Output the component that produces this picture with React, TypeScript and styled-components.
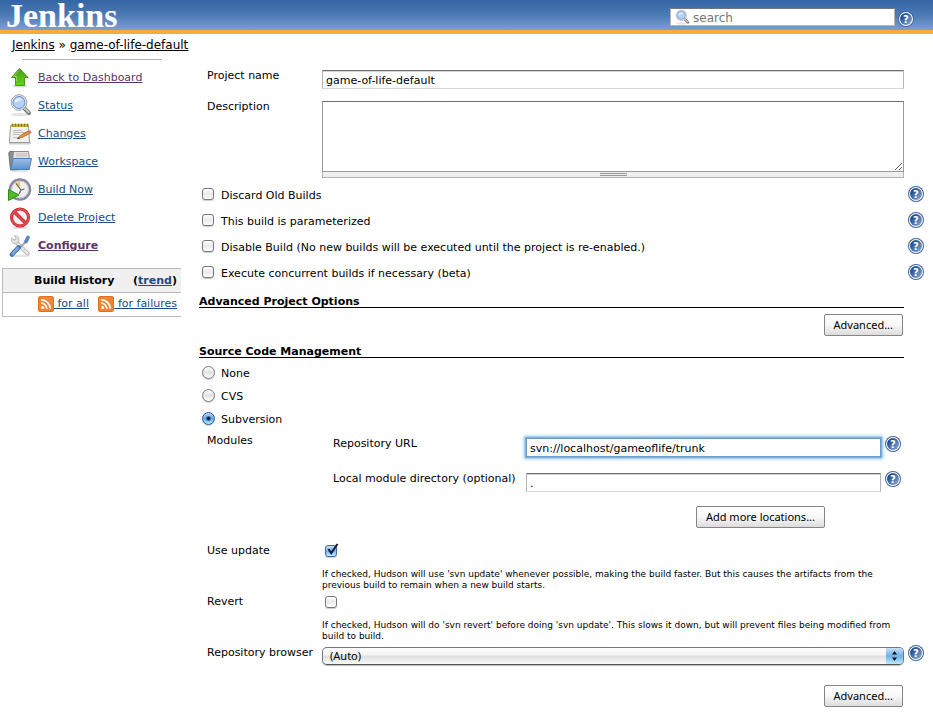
import React, { useState } from "react";
import styled, { createGlobalStyle, css } from "styled-components";

const GlobalStyle = createGlobalStyle`
  *, *::before, *::after { box-sizing: border-box; }
  body {
    margin: 0;
    background: #fff;
    color: #000;
    font: 11px/16px "DejaVu Sans", Verdana, sans-serif;
  }
  button, input, textarea, select { font: inherit; color: inherit; margin: 0; }
`;

/* ---------- header ---------- */

const Header = styled.header`
  display: flex;
  justify-content: space-between;
  height: 34px;
  padding: 0 19px 0 6px;
  border-bottom: 4px solid #fbab3c;
  background: linear-gradient(#3465a4, #4c7ab4 50%, #7d9fd3);
`;

const Logo = styled.a`
  color: #fff;
  font: bold 34px/32px "Liberation Serif", "Times New Roman", serif;
  text-decoration: none;
`;

const SearchForm = styled.form`
  display: flex;
  align-items: flex-start;
  gap: 3px;
  padding-top: 8px;
`;

const SearchBox = styled.label`
  display: flex;
  align-items: center;
  gap: 3px;
  width: 225px;
  height: 18px;
  padding-left: 3px;
  border: 1px solid #b8b4ac;
  border-top-color: #6f7787;
  background: #fff;
`;

const SearchInput = styled.input`
  flex: 1;
  min-width: 0;
  border: 0;
  padding: 1px 0 0;
  outline: 0;
  background: transparent;
  font-size: 12px;
  &::placeholder { color: #757575; opacity: 1; }
`;

/* ---------- page frame ---------- */

const Breadcrumbs = styled.nav`
  height: 24px;
  padding: 3px 12px;
  font-size: 12px;
  a { color: #000; }
`;

const Page = styled.div`
  display: grid;
  grid-template-columns: 199px minmax(0, 1fr);
`;

const Sidebar = styled.aside`
  padding-top: 1px;
`;

const Divider = styled.hr`
  width: 140px;
  height: 1px;
  margin: 0 0 3px 22px;
  border: 0;
  background: #b4b4b4;
`;

const Tasks = styled.ul`
  margin: 0;
  padding: 0 0 9px 8px;
  list-style: none;
`;

const Task = styled.li`
  display: flex;
  align-items: center;
  gap: 6px;
  height: 28px;
  svg { flex: none; }
  a { padding-top: 2px; }
`;

const Link = styled.a<{ $visited?: boolean; $strong?: boolean }>`
  color: ${(p) => (p.$visited ? "#5c3566" : "#204a87")};
  font-weight: ${(p) => (p.$strong ? "bold" : "inherit")};
`;

const History = styled.section`
  width: 179px;
  margin-left: 2px;
  border: 1px solid #bbb;
  border-right: 0;
`;

const HistoryHead = styled.h2`
  display: flex;
  justify-content: space-between;
  margin: 0;
  padding: 5px 4px 4px 31px;
  border-bottom: 1px solid #bbb;
  background: #f0f0f0;
  font-size: 11px;
  line-height: 14px;
`;

const Feeds = styled.div`
  display: flex;
  justify-content: space-between;
  height: 23px;
  padding: 3px 4px 0 35px;
  line-height: 16px;
  white-space: pre;
  svg { vertical-align: -5px; }
`;

/* ---------- form ---------- */

const Form = styled.form`
  padding-top: 10px;
`;

const Row = styled.div<{ $height: number }>`
  display: grid;
  grid-template-columns: 115px minmax(0, 1fr) 29px;
  min-height: ${(p) => p.$height}px;
  padding-left: 8px;
  white-space: nowrap;
`;

const fieldFrame = css`
  display: block;
  width: 100%;
  border: 1px solid #b5b5b5;
  border-top-color: #6e6e6e;
  border-bottom-color: #d6d6d6;
  border-radius: 0;
  background: #fff;
`;

const TextInput = styled.input`
  ${fieldFrame}
  height: 19px;
  margin-top: 2px;
  padding: 1px 3px 0;
  box-shadow: inset 0 1px #d4d4d4;
  outline: 0;
  &[data-active="true"] {
    border-color: #6a9dc8;
    box-shadow: 0 0 1px 1px #7db2dc, 0 0 3px 2px #8fc3ec;
  }
`;

const TextArea = styled.textarea`
  ${fieldFrame}
  height: 71px;
  margin-top: 2px;
  padding: 2px 3px;
  border-color: #6e6e6e #9a9a9a #9a9a9a;
  resize: vertical;
  outline: 0;
`;

const ResizeBar = styled.div`
  display: flex;
  justify-content: center;
  align-items: center;
  height: 6px;
  border: 1px solid #b5b5b5;
  border-top: 0;
  background: #eee;
  &::after {
    content: "";
    width: 27px;
    height: 3px;
    border: solid #999;
    border-width: 1px 0;
  }
`;

const HelpButton = styled.button<{ $drop?: number }>`
  display: block;
  width: 16px;
  height: 16px;
  margin: ${(p) => p.$drop ?? 0}px 0 0;
  padding: 0;
  border: 0;
  background: none;
  cursor: pointer;
  svg { display: block; }
`;

const HelpSlot = styled.div`
  padding-left: 4px;
`;

const Choices = styled.div<{ $pitch: number; $top: number; $bottom: number }>`
  display: grid;
  grid-auto-rows: ${(p) => p.$pitch}px;
  padding: ${(p) => p.$top}px 0 ${(p) => p.$bottom}px;
`;

const Choice = styled.div`
  display: flex;
  justify-content: space-between;
  align-items: center;
  padding: 0 9px 0 3px;
`;

const ChoiceLabel = styled.label`
  display: flex;
  align-items: center;
  gap: 7px;
  span { padding-top: 3px; }
`;

const Check = styled.input.attrs({ type: "checkbox" })`
  appearance: none;
  display: block;
  position: relative;
  flex: none;
  width: 12px;
  height: 12px;
  border: 1px solid #777;
  border-radius: 3px;
  background: linear-gradient(#fff, #e9e9e9 50%, #fff);
  box-shadow: 0 1px 1px #ccc;
  &:checked {
    border-color: #41689c;
    background: linear-gradient(#c6e0f8, #78b4ea 50%, #bdeaff);
  }
  &:checked::after {
    content: "";
    position: absolute;
    left: 0;
    bottom: 0;
    width: 13px;
    height: 13px;
    background: url("data:image/svg+xml,%3Csvg xmlns='http://www.w3.org/2000/svg' viewBox='0 0 13 13'%3E%3Cpath d='M2.5 6l2.7 4.2L11.5 1' fill='none' stroke='%23142136' stroke-width='2.1'/%3E%3C/svg%3E");
  }
`;

const CheckField = styled.div`
  padding: 2px 0 0 3px;
`;

const Radio = styled.input.attrs({ type: "radio" })`
  appearance: none;
  flex: none;
  width: 13px;
  height: 13px;
  margin-right: -1px;
  border: 1px solid #7b7b7b;
  border-radius: 50%;
  background: linear-gradient(#fff, #e2e2e2 50%, #fff);
  box-shadow: 0 1px 1px #ccc;
  &:checked {
    border-color: #315a95;
    background:
      radial-gradient(circle, #10213f 0 1px, transparent 3px),
      linear-gradient(#b8d8f6, #62a8e6 50%, #b4eaff);
  }
`;

const SectionTitle = styled.h3`
  margin: 0 29px 0 0;
  padding-top: 10px;
  border-bottom: 1px solid #000;
  font-size: 11px;
  line-height: 11px;
`;

const Actions = styled.div<{ $top: number; $right: number }>`
  display: flex;
  justify-content: flex-end;
  padding: ${(p) => p.$top}px ${(p) => p.$right}px 0 0;
`;

const PushButton = styled.button`
  height: 22px;
  padding: 0 9px;
  border: 1px solid #858585;
  border-radius: 2px;
  background: linear-gradient(#fff, #f8f8f8 50%, #dcdcdc);
  font: 11px/20px "Noto Sans", "Lucida Grande", sans-serif;
`;

const Module = styled.div`
  display: grid;
  grid-template-columns: 193px minmax(0, 1fr) 23px;
  height: 35px;
  padding-left: 11px;
`;

const Modules = styled.div`
  padding-top: 3px;
`;

const Hint = styled.p`
  margin: 12px 0 0;
  font-size: 9px;
  line-height: 11px;
  white-space: normal;
`;

const SelectFrame = styled.div`
  display: flex;
  height: 18px;
  margin-top: 2px;
  border: 1px solid #777;
  border-bottom-color: #555;
  border-radius: 5px;
  overflow: hidden;
  background: linear-gradient(#fff, #f3f3f3 45%, #dedede 50%, #fafafa);
  box-shadow: 0 1px 1px #bbb;
  svg { flex: none; }
`;

const Select = styled.select`
  appearance: none;
  flex: 1;
  min-width: 0;
  padding: 0 7px;
  border: 0;
  outline: 0;
  background: transparent;
  font: 11px/16px "Noto Sans", "Lucida Grande", sans-serif;
`;

/* ---------- icons ---------- */

const HelpIcon = () => (
  <svg width="16" height="16" viewBox="0 0 16 16" aria-hidden="true">
    <defs>
      <linearGradient id="help-fill" x2="1" y2="1">
        <stop offset="0.2" stopColor="#204a87" />
        <stop offset="0.9" stopColor="#85a5d2" />
      </linearGradient>
    </defs>
    <circle cx="8" cy="8" r="8" fill="#3c639e" />
    <circle cx="8" cy="8" r="7" fill="#fff" />
    <circle cx="8" cy="8" r="6" fill="url(#help-fill)" />
    <text x="8" y="12" textAnchor="middle" fontFamily="DejaVu Sans" fontWeight="bold" fontSize="10" fill="#fff">?</text>
  </svg>
);

const Help = ({ topic, drop }: { topic: string; drop?: number }) => (
  <HelpButton type="button" aria-label={`Help for ${topic}`} $drop={drop}>
    <HelpIcon />
  </HelpButton>
);

const Svg24 = ({ children }: { children: React.ReactNode }) => (
  <svg width="24" height="24" viewBox="0 0 24 24" aria-hidden="true">{children}</svg>
);

const ArrowIcon = () => (
  <Svg24>
    <defs>
      <linearGradient id="arrow-fill" x2="0" y2="1">
        <stop stopColor="#3f9d10" />
        <stop offset="0.55" stopColor="#5cb81c" />
        <stop offset="1" stopColor="#5ed80c" />
      </linearGradient>
    </defs>
    <ellipse cx="12" cy="21" rx="8" ry="1.6" fill="#ddd" />
    <path d="M11.5 3.5L20 12.5h-3.5v8h-9v-8H3.5z" fill="url(#arrow-fill)" stroke="#459a1b" strokeLinejoin="round" />
    <path d="M11.5 5L5.5 11.5h3V16" fill="none" stroke="#8ed15c" />
  </Svg24>
);

const lens = (
  <>
    <ellipse cx="12" cy="21.5" rx="9" ry="1.8" fill="#e4e4e4" />
    <path d="M16.5 15.500l4.500 4.500" stroke="#777" strokeWidth="4" strokeLinecap="round" />
    <path d="M16.500 15.300l4.200 4" stroke="#c9c9c9" strokeWidth="2" strokeLinecap="round" />
    <circle cx="11" cy="9.5" r="7.8" fill="#e9eef4" stroke="#a3a8b0" />
    <circle cx="11" cy="9.5" r="6" fill="#b5d2f5" stroke="#6c8fc0" />
    <path d="M6.500 9.500c0-5 6-5.500 8-2.500-3 0-5 2-8 2.500z" fill="#e6f1fd" />
  </>
);

const LensIcon = () => <Svg24>{lens}</Svg24>;
const SmallLensIcon = () => (
  <svg width="16" height="16" viewBox="0 0 24 24" aria-hidden="true">{lens}</svg>
);

const NotepadIcon = () => (
  <Svg24>
    <rect x="1" y="21" width="22" height="2.5" rx="1" fill="#cfcfcf" />
    <path d="M2.5 4.500h18l1 17h-20z" fill="#f2f2f0" stroke="#999" />
    <path d="M3.500 3h17v3H3.500z" fill="#c6ac3a" />
    <path d="M4.500 2.500v3M7.500 2.500v3M10.500 2.500v3M13.500 2.500v3M16.500 2.500v3M19.500 2.500v3" stroke="#8a7726" />
    <path d="M5 9.500h9M5 11.500h13M5 13.500h7M5 16.500h5" stroke="#bbb" />
    <path d="M9.500 17.500l3-3.200 8.500-4.500 1.500 2.200-8.500 4.500z" fill="#e29a39" stroke="#9a672a" strokeWidth="0.800" />
    <path d="M20 10.300l1.500 2.300 2.200-1.200-1.500-2.200z" fill="#e06a6a" />
    <path d="M9 18l1.600-1.800 1.200 1.200z" fill="#333" />
  </Svg24>
);

const FolderIcon = () => (
  <Svg24>
    <defs>
      <linearGradient id="folder-fill" x2="0" y2="1">
        <stop stopColor="#9dbfe6" />
        <stop offset="1" stopColor="#5e93cf" />
      </linearGradient>
    </defs>
    <path d="M.8 4l1-1.500h6l1 1.500v17H2.500z" fill="#8b8d8c" stroke="#707270" />
    <path d="M5.500 2.500h15l1 9-2 8H3.500z" fill="#e2e2e2" stroke="#8b8b8b" />
    <path d="M8 5h11M8 7h11" stroke="#bbb" />
    <path d="M5.200 9.500h18.300l-2.300 11H2.700z" fill="url(#folder-fill)" stroke="#4c7db8" strokeLinejoin="round" />
    <path d="M4 22h16" stroke="#ccc" />
  </Svg24>
);

const ClockIcon = () => (
  <Svg24>
    <circle cx="12" cy="12.500" r="10" fill="#efefec" stroke="#8b88a0" strokeWidth="2.400" />
    <circle cx="12" cy="12.500" r="8.300" fill="none" stroke="#d0cfda" />
    <path d="M12 12.500L7 6.500a7 7 0 0 1 5-1.800z" fill="#e8c95e" />
    <path d="M8 6.500l5 6.500-2 4M13 13l3.500-1" fill="none" stroke="#666" strokeWidth="1.200" />
    <path d="M.500 12.500l10.500 5.500L.500 23.500z" fill="#4fbd2a" stroke="#2f8d17" />
  </Svg24>
);

const ForbiddenIcon = () => (
  <Svg24>
    <ellipse cx="12" cy="22.500" rx="8" ry="1.300" fill="#ddd" />
    <circle cx="12" cy="12.500" r="8.500" fill="#f3efef" stroke="#b81f24" strokeWidth="3" />
    <path d="M6.200 6.700l11.600 11.600" stroke="#b81f24" strokeWidth="3.400" />
    <circle cx="12" cy="12.500" r="8.500" fill="none" stroke="#e5484c" strokeWidth="1.800" />
    <path d="M6.200 6.700l11.600 11.600" stroke="#e5484c" strokeWidth="2.200" />
  </Svg24>
);

const ToolsIcon = () => (
  <Svg24>
    <ellipse cx="12" cy="23" rx="10" ry="1" fill="#e4e4e4" />
    <path d="M7 8l12.500 12.500" stroke="#a9adaa" strokeWidth="4" strokeLinecap="round" />
    <path d="M7 8l12.500 12.500" stroke="#e4e6e4" strokeWidth="2.600" strokeLinecap="round" />
    <path d="M3.500 5l3 2.500 1.800-1.500-2-3.300c3-.4 5 1.500 4.600 4.500-.4 3-3 4-5 3.200-2-.7-3-3-2.400-5.400z" fill="#e4e6e4" stroke="#a9adaa" strokeWidth="0.800" />
    <path d="M17.500 9l-6 6" stroke="#a2a6a4" strokeWidth="2" />
    <path d="M20 4.500l-2 4" stroke="#5c88c2" strokeWidth="3.800" strokeLinecap="round" />
    <path d="M10.500 14.500l-6.500 7" stroke="#3d68a8" strokeWidth="4.600" strokeLinecap="round" />
    <path d="M10 15l-5.500 6" stroke="#77a3d9" strokeWidth="2.800" strokeLinecap="round" />
  </Svg24>
);

const FeedIcon = () => (
  <svg width="16" height="16" viewBox="0 0 16 16" aria-hidden="true">
    <rect width="16" height="16" rx="2.500" fill="#e1701d" />
    <rect x="1" y="1" width="14" height="14" rx="2" fill="#ee8636" />
    <circle cx="4.600" cy="11.500" r="1.500" fill="#fff" />
    <path d="M3.200 7.200a5.600 5.600 0 0 1 5.600 5.600M3.200 3.800a9 9 0 0 1 9 9" fill="none" stroke="#fff" strokeWidth="1.700" />
  </svg>
);

const SelectArrows = () => (
  <svg width="17" height="16" viewBox="0 0 17 16" aria-hidden="true">
    <defs>
      <linearGradient id="select-fill" x2="0" y2="1">
        <stop stopColor="#c9dff6" />
        <stop offset="0.5" stopColor="#6fb0ea" />
        <stop offset="1" stopColor="#b9ecff" />
      </linearGradient>
    </defs>
    <rect width="17" height="16" fill="url(#select-fill)" />
    <path d="M8.500 3L11 6.500H6zM8.500 13L6 9.500h5z" fill="#111" />
  </svg>
);

/* ---------- data ---------- */

const tasks = [
  { label: "Back to Dashboard", icon: <ArrowIcon />, visited: true },
  { label: "Status", icon: <LensIcon /> },
  { label: "Changes", icon: <NotepadIcon /> },
  { label: "Workspace", icon: <FolderIcon /> },
  { label: "Build Now", icon: <ClockIcon /> },
  { label: "Delete Project", icon: <ForbiddenIcon /> },
  { label: "Configure", icon: <ToolsIcon />, visited: true, strong: true },
];

const buildOptions = [
  "Discard Old Builds",
  "This build is parameterized",
  "Disable Build (No new builds will be executed until the project is re-enabled.)",
  "Execute concurrent builds if necessary (beta)",
];

const scmOptions = ["None", "CVS", "Subversion"];

export default function App() {
  const [scm, setScm] = useState("Subversion");

  return (
    <>
      <GlobalStyle />
      <Header>
        <Logo href="#">Jenkins</Logo>
        <SearchForm>
          <SearchBox>
            <SmallLensIcon />
            <SearchInput placeholder="search" aria-label="search" />
          </SearchBox>
          <Help topic="search" drop={3} />
        </SearchForm>
      </Header>
      <Breadcrumbs>
        <a href="#">Jenkins</a> » <a href="#">game-of-life-default</a>
      </Breadcrumbs>
      <Page>
        <Sidebar>
          <Divider />
          <Tasks>
            {tasks.map((t) => (
              <Task key={t.label}>
                {t.icon}
                <Link href="#" $visited={t.visited} $strong={t.strong}>{t.label}</Link>
              </Task>
            ))}
          </Tasks>
          <History>
            <HistoryHead>
              <span>Build History</span>
              <span>(<Link href="#">trend</Link>)</span>
            </HistoryHead>
            <Feeds>
              <Link href="#"><FeedIcon /> for all</Link>
              <Link href="#"><FeedIcon /> for failures</Link>
            </Feeds>
          </History>
        </Sidebar>

        <Form>
          <Row $height={31}>
            <label htmlFor="name">Project name</label>
            <TextInput id="name" defaultValue="game-of-life-default" />
          </Row>
          <Row $height={82}>
            <label htmlFor="description">Description</label>
            <div>
              <TextArea id="description" />
              <ResizeBar />
            </div>
          </Row>

          <Choices $pitch={26} $top={0} $bottom={1}>
            {buildOptions.map((o) => (
              <Choice key={o}>
                <ChoiceLabel><Check /><span>{o}</span></ChoiceLabel>
                <Help topic={o} />
              </Choice>
            ))}
          </Choices>

          <SectionTitle>Advanced Project Options</SectionTitle>
          <Actions $top={6} $right={30}>
            <PushButton type="button">Advanced...</PushButton>
          </Actions>

          <SectionTitle>Source Code Management</SectionTitle>
          <Choices $pitch={23} $top={3} $bottom={3}>
            {scmOptions.map((o) => (
              <Choice key={o}>
                <ChoiceLabel>
                  <Radio name="scm" checked={scm === o} onChange={() => setScm(o)} />
                  <span>{o}</span>
                </ChoiceLabel>
              </Choice>
            ))}
          </Choices>

          <Row $height={110}>
            <span>Modules</span>
            <Modules>
              <Module>
                <label htmlFor="url">Repository URL</label>
                <TextInput id="url" data-active="true" defaultValue="svn://localhost/gameoflife/trunk" />
                <HelpSlot><Help topic="Repository URL" /></HelpSlot>
              </Module>
              <Module>
                <label htmlFor="dir">Local module directory (optional)</label>
                <TextInput id="dir" defaultValue="." />
                <HelpSlot><Help topic="Local module directory" /></HelpSlot>
              </Module>
              <Actions $top={0} $right={79}>
                <PushButton type="button">Add more locations...</PushButton>
              </Actions>
            </Modules>
          </Row>

          <Row $height={51}>
            <label htmlFor="update">Use update</label>
            <CheckRow
              id="update"
              checked
              hint="If checked, Hudson will use 'svn update' whenever possible, making the build faster. But this causes the artifacts from the previous build to remain when a new build starts."
            />
          </Row>
          <Row $height={51}>
            <label htmlFor="revert">Revert</label>
            <CheckRow
              id="revert"
              hint="If checked, Hudson will do 'svn revert' before doing 'svn update'. This slows it down, but will prevent files being modified from build to build."
            />
          </Row>
          <Row $height={40}>
            <label htmlFor="browser">Repository browser</label>
            <SelectFrame>
              <Select id="browser"><option>(Auto)</option></Select>
              <SelectArrows />
            </SelectFrame>
            <HelpSlot><Help topic="Repository browser" /></HelpSlot>
          </Row>
          <Actions $top={0} $right={30}>
            <PushButton type="button">Advanced...</PushButton>
          </Actions>
        </Form>
      </Page>
    </>
  );
}

function CheckRow({ id, checked, hint }: { id: string; checked?: boolean; hint: string }) {
  return (
    <div>
      <CheckField><Check id={id} defaultChecked={checked} /></CheckField>
      <Hint>{hint}</Hint>
    </div>
  );
}
